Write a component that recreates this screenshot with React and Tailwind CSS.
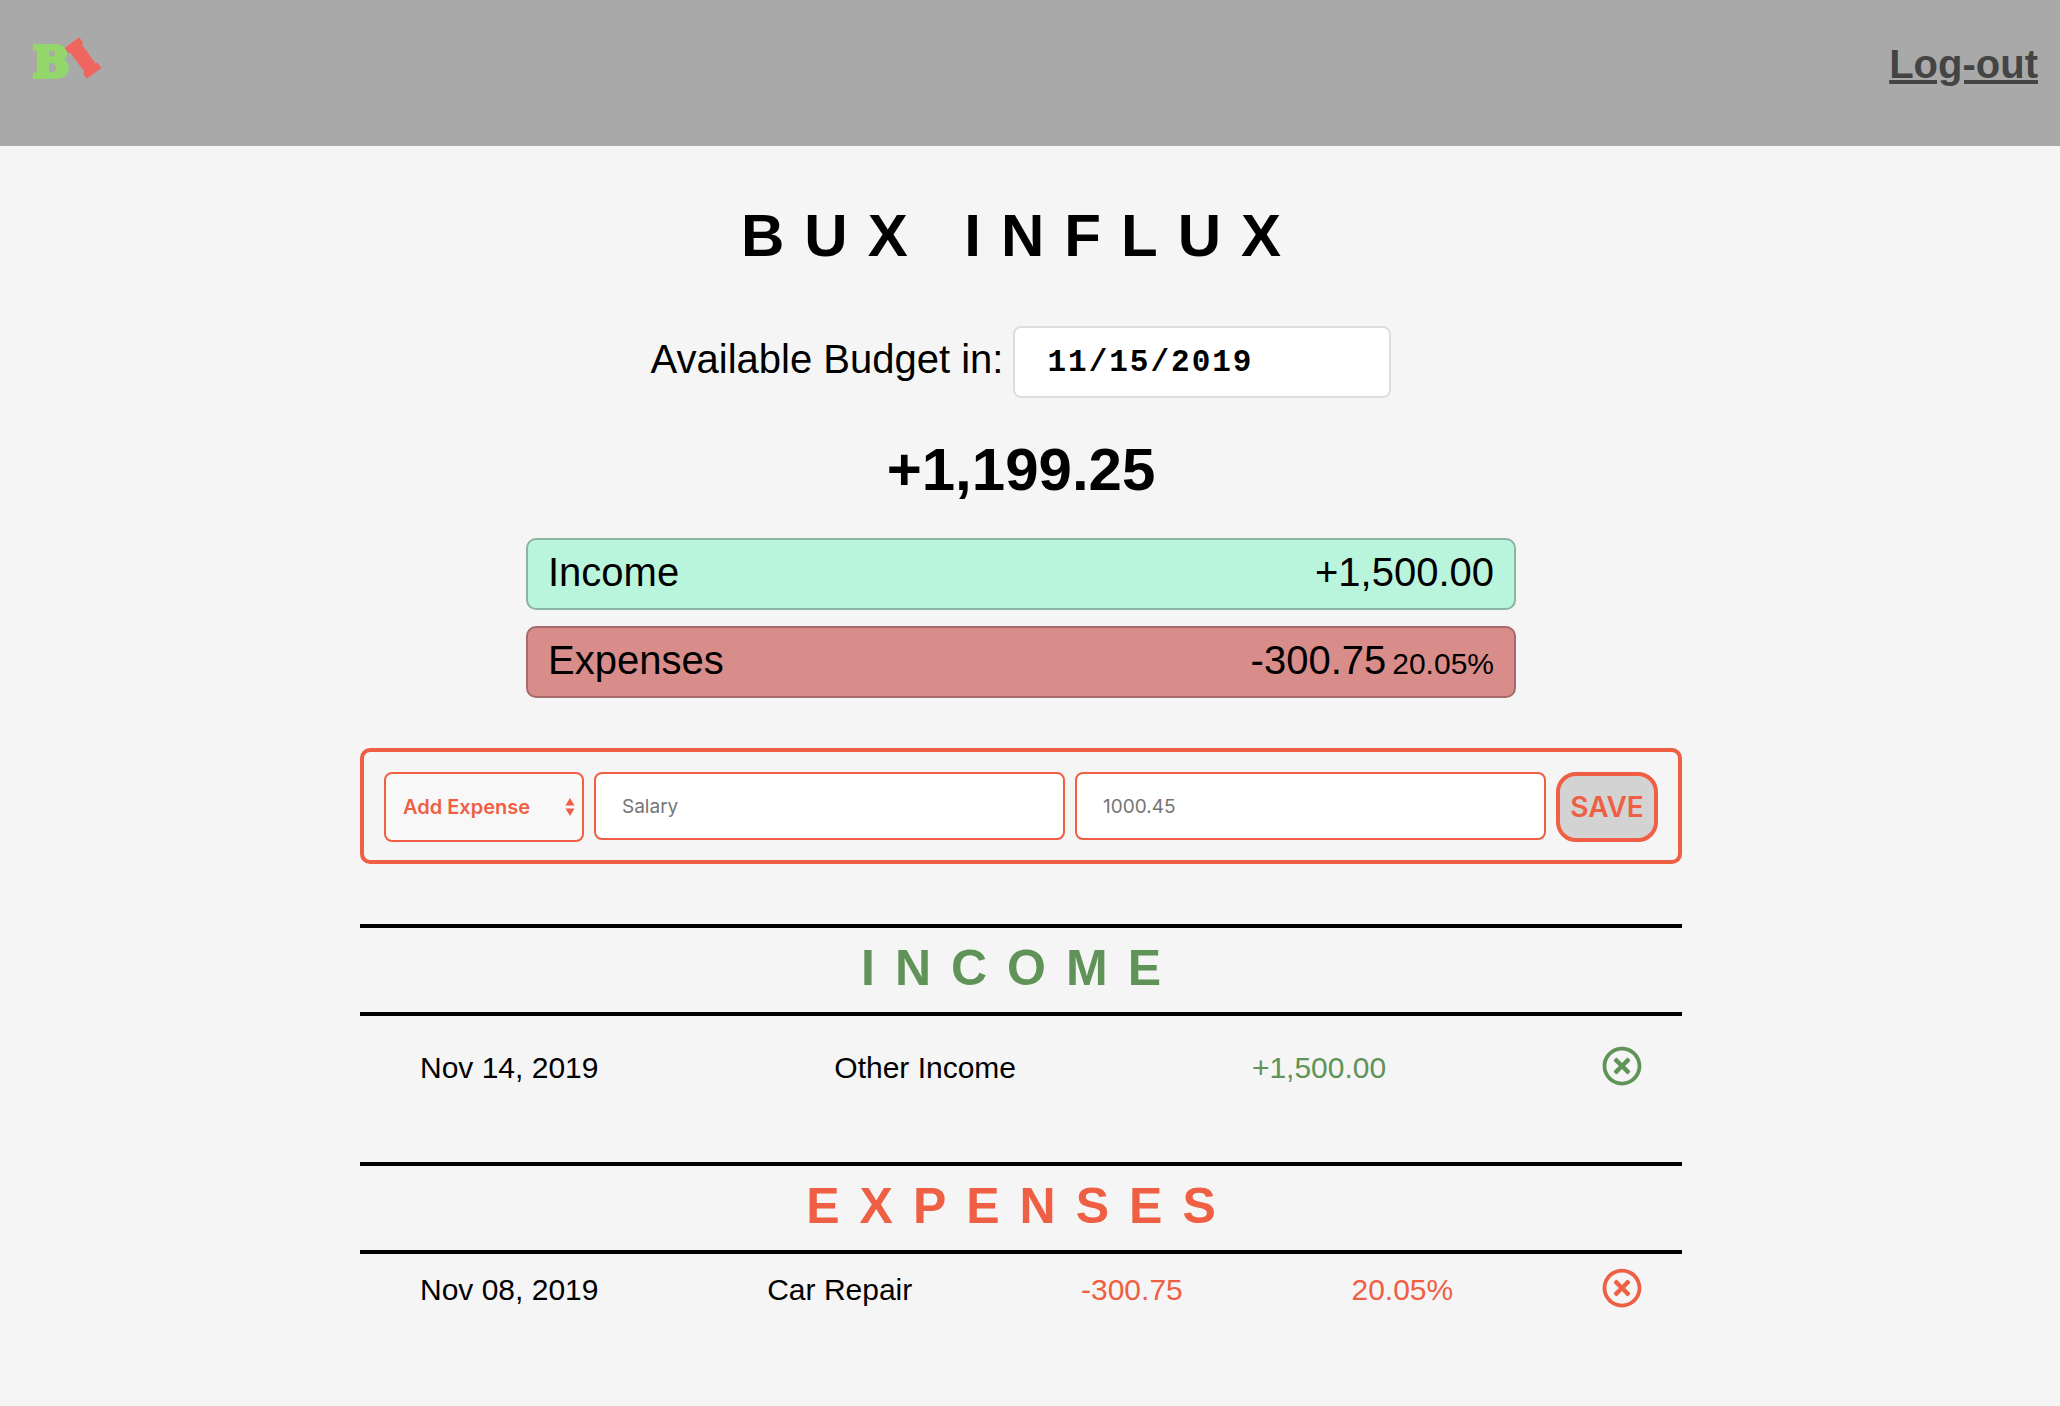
import { useState } from "react";
import { FaRegTimesCircle } from "react-icons/fa";

const income = [{ date: "Nov 14, 2019", label: "Other Income", amount: "+1,500.00" }];
const expenses = [
  { date: "Nov 08, 2019", label: "Car Repair", amount: "-300.75", percent: "20.05%" },
];

function Logo() {
  return (
    <svg viewBox="0 0 80 56" className="h-14 w-20 overflow-visible" role="img" aria-label="Bux Influx">
      <text
        x="2"
        y="45"
        fontFamily="DejaVu Serif"
        fontWeight="700"
        fontSize="43"
        fill="#93d66c"
        stroke="#93d66c"
        strokeWidth="4"
      >
        B
      </text>
      <g fill="#ef665f" transform="translate(52 26) rotate(-36)">
        <rect x="-9" y="-19" width="18" height="7" />
        <rect x="-7" y="-16" width="14" height="32" />
        <rect x="-9" y="12" width="18" height="7" />
      </g>
    </svg>
  );
}

function Header() {
  return (
    <header className="flex items-start justify-between bg-[#a9a9a9] pt-8 pr-[22px] pb-[58px] pl-[31px]">
      <a href="#home">
        <Logo />
      </a>
      <a href="#logout" className="mt-2 text-[40px] leading-[48px] font-bold text-[#444444] underline">
        Log-out
      </a>
    </header>
  );
}

function EntrySection({ title, color, entries, rowClass }) {
  return (
    <section className={color}>
      <h2 className="border-y-4 border-black pt-2.5 pb-3.5 text-center text-[50px] leading-[60px] font-bold tracking-[20px]">
        {title}
      </h2>
      <ul className={rowClass}>
        {entries.map((e) => (
          <li key={e.label} className="flex items-center justify-between px-10 text-[30px] leading-9">
            <span className="px-5 text-black">{e.date}</span>
            <span className="px-5 text-black">{e.label}</span>
            <span className="px-5">{e.amount}</span>
            {e.percent && <span className="px-5">{e.percent}</span>}
            <button type="button" aria-label={`Delete ${e.label}`} className="mb-1">
              <FaRegTimesCircle className="size-10" />
            </button>
          </li>
        ))}
      </ul>
    </section>
  );
}

const field = "rounded-lg border-2 border-[#ee5f43] font-[Inter,sans-serif] outline-none";

export default function App() {
  const [date, setDate] = useState("11/15/2019");
  return (
    <div className="min-h-screen bg-[#f5f5f5] font-['Liberation_Sans',Arial,sans-serif] text-black">
      <Header />
      <main className="flex flex-col items-center pt-[54px] pr-[18px] pb-10">
        <h1 className="text-[60px] leading-[72px] font-bold tracking-[20px]">BUX INFLUX</h1>
        <div className="mt-[54px] flex items-center gap-2.5">
          <label htmlFor="budget-date" className="mb-1.5 text-[40px] leading-[48px]">
            Available Budget in:
          </label>
          <input
            id="budget-date"
            type="text"
            value={date}
            onChange={(ev) => setDate(ev.target.value)}
            className="h-[72px] w-[378px] rounded-lg border-2 border-[#dddddd] bg-white px-8 font-['Liberation_Mono',monospace] text-[31px] font-bold tracking-[2px] outline-none"
          />
        </div>
        <p className="mt-9 text-[60px] leading-[72px] font-bold">+1,199.25</p>

        <div className="mt-8 flex w-full max-w-[990px] flex-col gap-4 text-[40px] leading-[48px]">
          <div className="flex items-baseline justify-between rounded-[10px] border-2 border-[#8ab3a2] bg-[#b9f5dc] px-5 pt-2 pb-3">
            <span>Income</span>
            <span>+1,500.00</span>
          </div>
          <div className="flex items-baseline justify-between rounded-[10px] border-2 border-[#a56a6a] bg-[#d98d8b] px-5 pt-2 pb-3">
            <span>Expenses</span>
            <span className="flex items-baseline gap-1.5">
              -300.75 <small className="text-[30px] leading-none">20.05%</small>
            </span>
          </div>
        </div>

        <div className="mt-[50px] w-full max-w-[1322px]">
          <form
            className="flex items-start gap-2.5 rounded-[10px] border-4 border-[#ee5f43] p-5 pb-[18px]"
            onSubmit={(ev) => ev.preventDefault()}
          >
            <div className="relative w-[200px] shrink-0">
              <select
                aria-label="Entry type"
                defaultValue="expense"
                className={`${field} block h-[70px] w-full appearance-none bg-[#f8f8f8] pl-[17px] text-[20px] font-semibold text-[#ee5f43]`}
              >
                <option value="expense">Add Expense</option>
                <option value="income">Add Income</option>
              </select>
              <svg
                viewBox="0 0 10 18"
                className="pointer-events-none absolute top-[26px] right-[9px] h-[18px] w-[10px] fill-[#ee5f43]"
                aria-hidden="true"
              >
                <path d="M5 0l4.5 7.5h-9zM5 18l4.5-7.5h-9z" />
              </svg>
            </div>
            <input
              type="text"
              aria-label="Description"
              placeholder="Salary"
              className={`${field} h-[68px] min-w-0 flex-1 bg-white px-[26px] text-[19px] placeholder:text-[#757575]`}
            />
            <input
              type="text"
              aria-label="Amount"
              placeholder="1000.45"
              className={`${field} h-[68px] min-w-0 flex-1 bg-white px-[26px] text-[19px] placeholder:text-[#757575]`}
            />
            <button
              type="submit"
              className="h-[70px] w-[102px] shrink-0 rounded-[20px] border-4 border-[#ee5f43] bg-[#d3d3d3] font-[Inter,sans-serif] text-[28px] font-semibold text-[#ee5f43]"
            >
              SAVE
            </button>
          </form>

          <div className="mt-[60px] flex flex-col gap-[72px]">
            <EntrySection title="INCOME" color="text-[#609357]" entries={income} rowClass="pt-[30px]" />
            <EntrySection title="EXPENSES" color="text-[#ee5f43]" entries={expenses} rowClass="pt-3.5" />
          </div>
        </div>
      </main>
    </div>
  );
}
